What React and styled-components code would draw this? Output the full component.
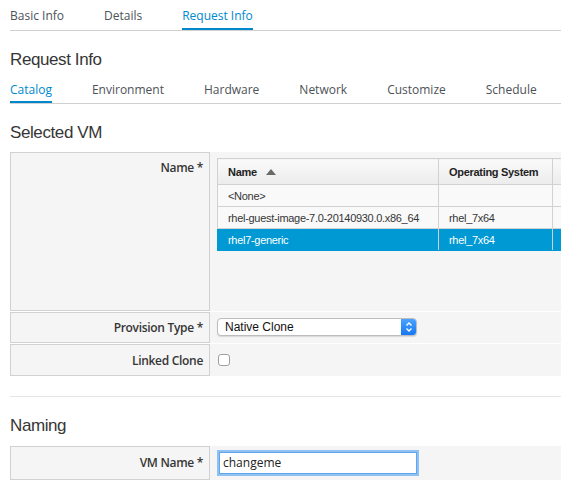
import React from "react"
import styled, { createGlobalStyle } from "styled-components"

const GlobalStyle = createGlobalStyle`
  body {
    margin: 0;
    background: #fff;
    overflow: hidden;
    font-family: "Open Sans", sans-serif;
    color: #363636;
  }
`

const Page = styled.div`
  padding-left: 10px;
  width: 551px;
`

const Tabs = styled.div`
  display: flex;
  gap: 40px;
  border-bottom: 1px solid #d1d1d1;
  height: ${(p) => p.$height}px;
  padding-top: ${(p) => p.$top}px;
  box-sizing: border-box;
  align-items: flex-start;
`

const Tab = styled.div`
  font-size: 12px;
  line-height: 18px;
  color: ${(p) => (p.$active ? "#0088ce" : "#4d5258")};
  height: 100%;
  box-sizing: border-box;
  border-bottom: 2px solid ${(p) => (p.$active ? "#0088ce" : "transparent")};
  margin-bottom: -1px;
  white-space: nowrap;
`

const Heading = styled.h2`
  font-family: "Liberation Sans", Arial, sans-serif;
  font-weight: normal;
  font-size: 17px;
  letter-spacing: -0.4px;
  line-height: 22px;
  color: #363636;
  margin: ${(p) => p.$top}px 0 ${(p) => p.$bottom}px;
`

const Divider = styled.hr`
  border: none;
  border-top: 1px solid #e5e5e5;
  margin: 20px 0 0;
`

const Form = styled.div`
  display: flex;
  flex-direction: column;
  gap: 1px;
`

const Row = styled.div`
  display: flex;
  height: ${(p) => p.$height}px;
`

const Label = styled.div`
  width: 200px;
  flex: none;
  box-sizing: border-box;
  border: 1px solid #d1d1d1;
  background: #f5f5f5;
  text-align: right;
  padding: ${(p) => p.$pad || 6}px 6px 0 0;
  font-size: 12px;
  font-weight: 600;
  letter-spacing: -0.3px;
  line-height: 18px;
  color: #363636;
`

const Field = styled.div`
  flex: 1;
  background: #f5f5f5;
  padding: ${(p) => p.$pad || 0}px 0 0 7px;
  display: flex;
  align-items: ${(p) => (p.$center ? "center" : "flex-start")};
  overflow: hidden;
`

const Table = styled.table`
  border-collapse: collapse;
  font-family: "Liberation Sans", Arial, sans-serif;
  font-size: 11px;
  letter-spacing: -0.3px;
  color: #363636;
  flex: none;
  table-layout: fixed;
  width: 400px;
`

const Th = styled.th`
  text-align: left;
  font-weight: bold;
  color: #222;
  height: 26px;
  box-sizing: border-box;
  padding: 0 0 0 10px;
  border: 1px solid #d1d1d1;
  background: linear-gradient(#fafafa, #ececec);
  width: ${(p) => p.$w}px;
  white-space: nowrap;
`

const Tr = styled.tr`
  background: ${(p) => (p.$selected ? "#0099d3" : "#f9f9f9")};
  color: ${(p) => (p.$selected ? "#fff" : "#363636")};
`

const Td = styled.td`
  height: 22px;
  box-sizing: border-box;
  padding: 0 0 0 10px;
  border: 1px solid ${(p) => (p.$selected ? "#0099d3" : "#d1d1d1")};
  border-right-color: #d1d1d1;
  white-space: nowrap;
`

const SortArrow = styled.span`
  display: inline-block;
  width: 0;
  height: 0;
  margin-left: 6px;
  border-left: 5px solid transparent;
  border-right: 5px solid transparent;
  border-bottom: 6px solid #6a6a6a;
  vertical-align: 1px;
`

const Select = styled.div`
  width: 200px;
  height: 18px;
  box-sizing: border-box;
  background: #fff;
  border: 1px solid #bdbdbd;
  border-radius: 4px;
  box-shadow: 0 1px 1px rgba(0, 0, 0, 0.12);
  display: flex;
  align-items: center;
  overflow: hidden;
  font-family: "Liberation Sans", Arial, sans-serif;
  font-size: 12px;
  color: #111;
`

const SelectText = styled.span`
  flex: 1;
  padding-left: 7px;
`

const SelectButton = styled.span`
  width: 15px;
  height: 100%;
  background: linear-gradient(#4aa3ff, #1677f0);
  display: flex;
  align-items: center;
  justify-content: center;
`

const Checkbox = styled.span`
  width: 12px;
  height: 12px;
  box-sizing: border-box;
  border: 1px solid #a0a0a0;
  border-radius: 3px;
  background: #fff;
  margin-left: 1px;
`

const Input = styled.div`
  width: 198px;
  height: 22px;
  margin-left: 2px;
  box-sizing: border-box;
  background: #fff;
  border: 1px solid #5ea7ee;
  box-shadow: 0 0 0 2px rgba(110, 175, 240, 0.75);
  font-size: 12px;
  line-height: 20px;
  padding-left: 3px;
  color: #222;
`

const rows = [
  { name: "<None>", os: "" },
  { name: "rhel-guest-image-7.0-20140930.0.x86_64", os: "rhel_7x64" },
  { name: "rhel7-generic", os: "rhel_7x64", selected: true },
]

export default function App() {
  return (
    <Page>
      <GlobalStyle />
      <Tabs $height={31} $top={7}>
        <Tab>Basic Info</Tab>
        <Tab>Details</Tab>
        <Tab $active>Request Info</Tab>
      </Tabs>
      <Heading $top={18} $bottom={0}>Request Info</Heading>
      <Tabs $height={33} $top={10}>
        <Tab $active>Catalog</Tab>
        <Tab>Environment</Tab>
        <Tab>Hardware</Tab>
        <Tab>Network</Tab>
        <Tab>Customize</Tab>
        <Tab>Schedule</Tab>
      </Tabs>
      <Heading $top={18} $bottom={8}>Selected VM</Heading>
      <Form>
        <Row $height={159}>
          <Label>Name *</Label>
          <Field $pad={6}>
            <Table>
              <thead>
                <tr>
                  <Th $w={221}>
                    Name <SortArrow />
                  </Th>
                  <Th $w={114}>Operating System</Th>
                  <Th $w={65}></Th>
                </tr>
              </thead>
              <tbody>
                {rows.map((r) => (
                  <Tr key={r.name} $selected={r.selected}>
                    <Td $selected={r.selected}>{r.name}</Td>
                    <Td $selected={r.selected}>{r.os}</Td>
                    <Td $selected={r.selected}></Td>
                  </Tr>
                ))}
              </tbody>
            </Table>
          </Field>
        </Row>
        <Row $height={31}>
          <Label>Provision Type *</Label>
          <Field $pad={6}>
            <Select>
              <SelectText>Native Clone</SelectText>
              <SelectButton>
                <svg width="8" height="12" viewBox="0 0 8 12">
                  <path d="M1.5 4.5 L4 2 L6.5 4.5 M1.5 7.5 L4 10 L6.5 7.5" stroke="#fff" strokeWidth="1.4" fill="none" />
                </svg>
              </SelectButton>
            </Select>
          </Field>
        </Row>
        <Row $height={32}>
          <Label $pad={7}>Linked Clone</Label>
          <Field $center>
            <Checkbox />
          </Field>
        </Row>
      </Form>
      <Divider />
      <Heading $top={18} $bottom={9}>Naming</Heading>
      <Form>
        <Row $height={34}>
          <Label $pad={7}>VM Name *</Label>
          <Field $center>
            <Input>changeme</Input>
          </Field>
        </Row>
      </Form>
    </Page>
  )
}
